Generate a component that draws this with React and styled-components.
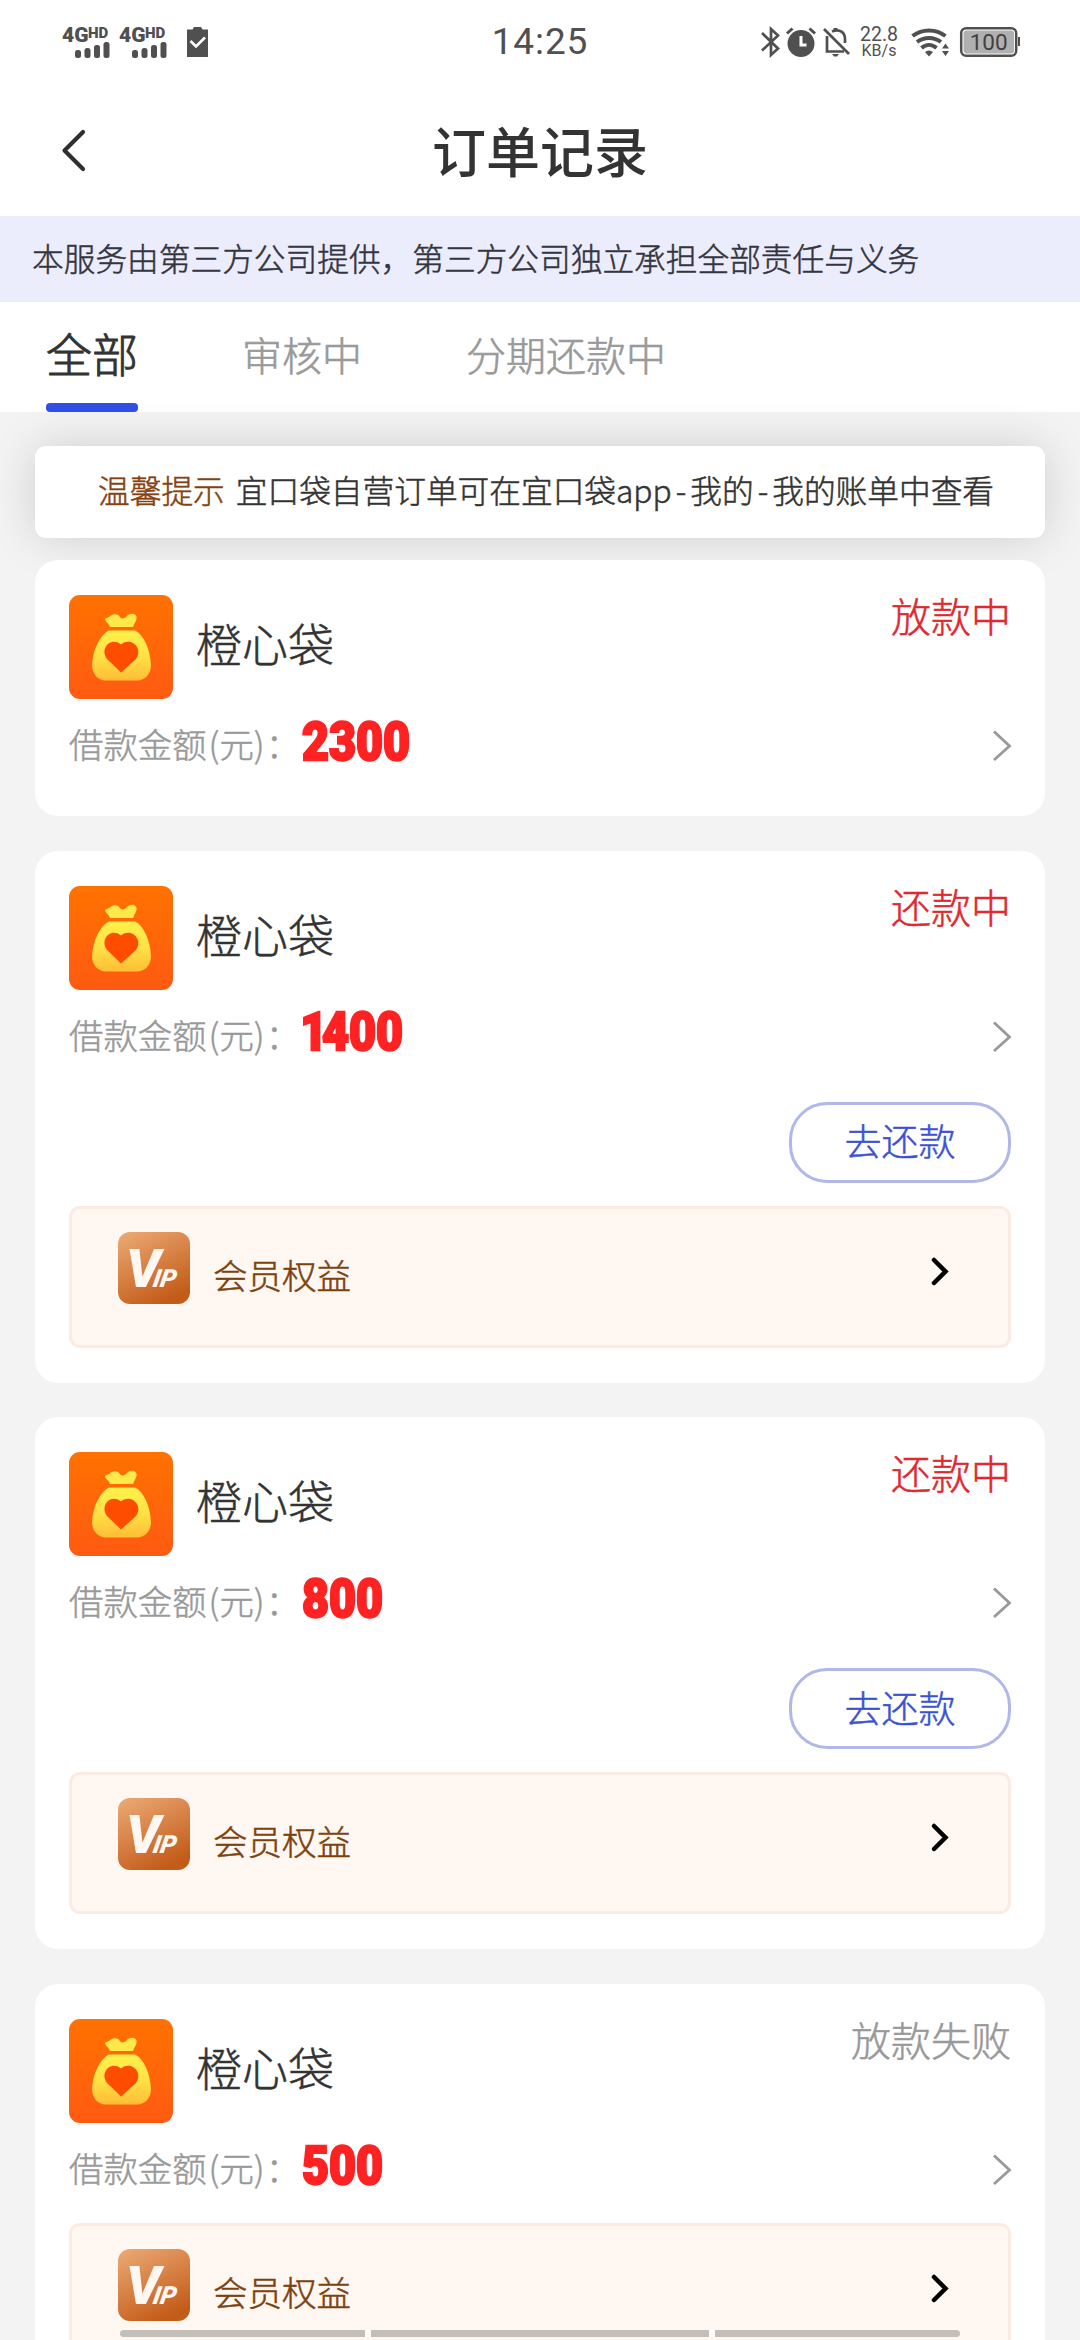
import styled, { createGlobalStyle } from "styled-components";

const GlobalStyle = createGlobalStyle`
  * {
    box-sizing: border-box;
  }

  body {
    margin: 0;
    background-color: #f3f3f3;
    font-family: "Noto Sans CJK SC", "Noto Sans", sans-serif;
    font-weight: 300;
    color: #333;
    -webkit-text-stroke: 0.5px currentColor;
  }
`;

const Page = styled.div`
  position: relative;
  width: 1080px;
  height: 2340px;
  overflow: hidden;
  background-color: #f3f3f3;
`;

const StatusBar = styled.div`
  height: 84px;
  padding: 0 59px 0 62px;
  display: grid;
  grid-template-columns: 1fr auto 1fr;
  align-items: center;
  background-color: #fff;
  -webkit-text-stroke: 0;
`;

const StatusGroup = styled.div`
  display: flex;
  align-items: center;
  justify-content: ${(props) => (props.$end ? "flex-end" : "flex-start")};
`;

const Icon = styled.svg`
  display: block;
  flex-shrink: 0;
  overflow: visible;
  margin-left: ${(props) => props.$gap || 0}px;
`;

const Clock = styled.span`
  padding-right: 3px;
  font-family: Roboto, sans-serif;
  font-size: 37px;
  font-weight: 400;
  line-height: 84px;
  letter-spacing: 0.9px;
  color: #505050;
`;

const NetSpeed = styled.div`
  width: 38px;
  margin-left: 10px;
  display: flex;
  flex-direction: column;
  align-items: center;
  font-family: Roboto, sans-serif;
  font-size: 19.5px;
  font-weight: 400;
  line-height: 17px;
  color: #505050;
`;

const NetUnit = styled.span`
  font-size: 16px;
  line-height: 15px;
`;

const Header = styled.div`
  height: 132px;
  padding: 0 62px;
  display: grid;
  grid-template-columns: 1fr auto 1fr;
  align-items: center;
  background-color: #fff;
`;

const Title = styled.h1`
  margin: 0;
  font-size: 54px;
  font-weight: 500;
  line-height: 132px;
  -webkit-text-stroke: 0;
`;

const Notice = styled.div`
  height: 86px;
  padding-left: 32px;
  font-size: 31.7px;
  line-height: 82px;
  white-space: nowrap;
  color: #33343d;
  background-color: #ebedfd;
`;

const Tabs = styled.div`
  height: 110px;
  padding-left: 46px;
  display: flex;
  background-color: #fff;
`;

const Tab = styled.div`
  height: 110px;
  margin-right: 104px;
  display: flex;
  flex-direction: column;
  justify-content: space-between;
  font-size: ${(props) => (props.$active ? 46 : 40)}px;
  line-height: ${(props) => (props.$active ? 100 : 105)}px;
  color: ${(props) => (props.$active ? "#333" : "#999")};
  -webkit-text-stroke-width: ${(props) => (props.$active ? 0.9 : 0.6)}px;

  &::after {
    content: "";
    height: 9px;
    margin-top: -8px;
    border-radius: 4px;
    background-color: ${(props) => (props.$active ? "#314fe6" : "transparent")};
  }
`;

const Content = styled.div`
  padding: 34px 35px 0;
`;

const Tip = styled.div`
  height: 92px;
  margin-bottom: 22px;
  padding-left: 63px;
  border-radius: 11px;
  font-size: 31.7px;
  line-height: 86px;
  white-space: nowrap;
  background-color: #fff;
  box-shadow: 0 0 46px rgba(0, 0, 0, 0.15);
`;

const TipLabel = styled.span`
  margin-right: 11px;
  color: #854210;
`;

const Dash = styled.span`
  margin: 0 4px;
`;

const Card = styled.div`
  position: relative;
  margin-bottom: 34.7px;
  padding: 35px 34px;
  border-radius: 23px;
  background-color: #fff;
`;

const CardHead = styled.div`
  height: 104px;
  display: flex;
`;

const Name = styled.span`
  margin-left: 23px;
  flex: 1;
  font-size: 46px;
  line-height: 95px;
`;

const Status = styled.span`
  font-size: 40px;
  line-height: 41px;
  color: ${(props) => (props.$muted ? "#999" : "#e0282e")};
`;

const AmountRow = styled.div`
  height: 82px;
  display: flex;
  align-items: center;
`;

const AmountLabel = styled.span`
  padding-top: 6px;
  font-size: 34.4px;
  line-height: 72px;
  color: #999;
`;

const Unit = styled.span`
  margin: 0 1px 0 2px;
`;

const Amount = styled.span`
  flex: 1;
  margin-left: 2px;
  padding-top: 3px;
  font-family: Roboto, sans-serif;
  font-size: 53px;
  font-weight: 900;
  line-height: 80px;
  color: #ff2222;
  -webkit-text-stroke: 2.4px #ff2222;
  transform: scaleX(0.88);
  transform-origin: left;
`;

// the digit 1 is set narrower than the others
const NarrowDigit = styled.span`
  margin: 0 -6px 0 -2px;
`;

const Actions = styled.div`
  margin: 30px 0 23px;
  display: flex;
  justify-content: flex-end;
`;

const RepayButton = styled.button`
  width: 222px;
  height: 81px;
  padding: 0 0 4px;
  border: 3px solid #afb8e8;
  border-radius: 38px;
  font-family: inherit;
  font-size: 37px;
  font-weight: 300;
  line-height: 70px;
  color: #3b51d4;
  background-color: #fff;
  -webkit-text-stroke: 0.5px currentColor;
`;

const VipBox = styled.div`
  height: 142px;
  margin-top: 18px;
  padding: 23px 59px 0 46px;
  display: flex;
  align-items: flex-start;
  border: 3px solid #fbebe0;
  border-radius: 11px;
  background-color: #fff7f1;
`;

const VipText = styled.span`
  margin-left: 23px;
  flex: 1;
  font-size: 34.5px;
  line-height: 84px;
  color: #7d410d;
`;

const NavHint = styled.div`
  position: absolute;
  left: 120px;
  bottom: 3px;
  width: 840px;
  height: 7px;
  display: grid;
  grid-template-columns: 245px 1fr 245px;
  gap: 6px;
  border-radius: 4px;
  overflow: hidden;
  background-color: #fff;
`;

const NavSegment = styled.div`
  background-color: #c4beb8;
`;

function SignalIcon({ gap }) {
  return (
    <Icon $gap={gap} width="48" height="34" viewBox="0 0 48 34" fill="#505050">
      <text x="0" y="17" fontFamily="Roboto, sans-serif" fontWeight="900" fontSize="21">
        4G
        <tspan x="26" y="12.5" fontSize="15">HD</tspan>
      </text>
      <rect x="13" y="25" width="6" height="8" rx="2.5" />
      <rect x="22.5" y="23" width="6" height="10" rx="2.5" />
      <rect x="32" y="20" width="6" height="13" rx="2.5" />
      <rect x="41.5" y="17" width="6" height="16" rx="2.5" />
    </Icon>
  );
}

function StatusIcons() {
  return (
    <StatusGroup $end>
      <Icon width="19" height="30" viewBox="0 0 19 30" fill="none" stroke="#505050" strokeWidth="2.7">
        <path d="M1 6 L17 21.5 L10 28 V2 L17 8.5 L1 23.5" />
      </Icon>
      <Icon $gap={6} width="30" height="30" viewBox="0 0 30 30">
        <circle cx="15" cy="16.5" r="13.5" fill="#505050" />
        <path d="M1 6.5 L6.5 1.5 M29 6.5 L23.5 1.5" stroke="#505050" strokeWidth="3" />
        <path d="M15 9 V18 H20.5" fill="none" stroke="#fff" strokeWidth="3" />
      </Icon>
      <Icon $gap={7} width="27" height="30" viewBox="0 0 27 30" fill="none" stroke="#505050" strokeWidth="2.7">
        <path d="M1 2 L26 27 M4 9 V24.5 H21 M9 4.5 C17 1 22 6 22 12 V16" />
        <path d="M10.5 2.5 H14.5" strokeWidth="3" />
        <path d="M9 27 H16 L14 29.5 H11 Z" fill="#505050" stroke="none" />
      </Icon>
      <NetSpeed>
        <span>22.8</span>
        <NetUnit>KB/s</NetUnit>
      </NetSpeed>
      <Icon $gap={13} width="39" height="29" viewBox="0 0 39 29" fill="none" stroke="#505050" strokeWidth="4">
        <path d="M1.5 8 C11 0.5 25 0.5 34.5 8" />
        <path d="M6 14 C13 8.5 23 8.5 30 14" />
        <path d="M10.5 20 C15 16 21 16 25.5 20" />
        <path d="M14 24 Q18 21 22 24 L18 28.5 Z M31 20.5 L34.5 15.5 L38 20.5 Z M31 23 L34.5 28 L38 23 Z" fill="#505050" stroke="none" />
      </Icon>
      <Icon $gap={10} width="61" height="30" viewBox="0 0 61 30">
        <rect x="1.2" y="1.2" width="55" height="27.6" rx="5" fill="#fff" stroke="#505050" strokeWidth="2.5" />
        <rect x="3.5" y="3.5" width="50.5" height="23" rx="3" fill="#b0b0b0" />
        <path d="M58 10 h2 v9 h-2 z" fill="#505050" />
        <text x="28.7" y="23" textAnchor="middle" fontFamily="Roboto, sans-serif" fontWeight="400" fontSize="22.5" fill="#404040">100</text>
      </Icon>
    </StatusGroup>
  );
}

function BagLogo() {
  return (
    <Icon width="104" height="104" viewBox="0 0 104 104">
      <defs>
        <linearGradient id="bagBg" x1="0" y1="0" x2="0" y2="1">
          <stop offset="0" stopColor="#ff7200" />
          <stop offset="1" stopColor="#ff5a12" />
        </linearGradient>
        <linearGradient id="bagBody" x1="0" y1="0" x2="0" y2="1">
          <stop offset="0" stopColor="#fff04a" />
          <stop offset="0.5" stopColor="#ffe246" />
          <stop offset="1" stopColor="#ffbd36" />
        </linearGradient>
      </defs>
      <rect width="104" height="104" rx="11" fill="url(#bagBg)" />
      <path d="M36 24 C38 22 40 23 42 20.5 C45 18.5 49 19 50.5 21.5 C52 24 55 24 57 22 C60 18 65 18 67 20.5 C69 24 66 27 64 32 H41 C40 28 36 27 36 24 Z" fill="#ffe84a" />
      <path d="M40 35.5 H66 C75 40 81 54 82 70 C82 79 76 85.5 68 85.5 H37 C29 85.5 23 79 23 70 C24 54 31 40 40 35.5 Z" fill="url(#bagBody)" />
      <path d="M52 77.5 L38.5 64.5 C30 55 41 41 52 49.5 C63 41 75 55 66.5 64.5 Z" fill="#ff4d00" />
    </Icon>
  );
}

function VipLogo() {
  return (
    <Icon width="72" height="72" viewBox="0 0 72 72">
      <defs>
        <linearGradient id="vipBg" x1="0.1" y1="0" x2="0.6" y2="1">
          <stop offset="0" stopColor="#eba873" />
          <stop offset="1" stopColor="#c35b19" />
        </linearGradient>
      </defs>
      <rect width="72" height="72" rx="12" fill="url(#vipBg)" />
      <path d="M11.5 17 H20 V20.5 H13 Z" fill="#fff7f1" />
      <g fill="#fff7f1" stroke="none" fontFamily="Roboto, sans-serif" fontWeight="900" fontStyle="italic">
        <text transform="translate(8 55)" fontSize="54">V</text>
        <text transform="translate(34 55) skewX(-10)" fontSize="25">IP</text>
      </g>
    </Icon>
  );
}

function OrderCard({ amount, status, muted, repay, vip }) {
  return (
    <Card>
      <CardHead>
        <BagLogo />
        <Name>橙心袋</Name>
        <Status $muted={muted}>{status}</Status>
      </CardHead>
      <AmountRow>
        <AmountLabel>
          借款金额<Unit>(元)</Unit>：
        </AmountLabel>
        <Amount>
          {amount.startsWith("1") ? (
            <>
              <NarrowDigit>1</NarrowDigit>
              {amount.slice(1)}
            </>
          ) : (
            amount
          )}
        </Amount>
        <Icon width="18" height="32" viewBox="0 0 18 32" fill="none" stroke="#999" strokeWidth="2.8">
          <path d="M1 7.5 L16.5 22 L1 36" />
        </Icon>
      </AmountRow>
      {repay && (
        <Actions>
          <RepayButton>去还款</RepayButton>
        </Actions>
      )}
      {vip && (
        <VipBox>
          <VipLogo />
          <VipText>会员权益</VipText>
          <Icon width="18" height="78" viewBox="0 0 18 78" fill="none" stroke="#000" strokeWidth="4.5" strokeLinecap="round">
            <path d="M3 28 L14.5 39.5 L3 51" />
          </Icon>
        </VipBox>
      )}
    </Card>
  );
}

const orders = [
  { amount: "2300", status: "放款中" },
  { amount: "1400", status: "还款中", repay: true, vip: true },
  { amount: "800", status: "还款中", repay: true, vip: true },
  { amount: "500", status: "放款失败", muted: true, vip: true },
];

function App() {
  return (
    <Page>
      <GlobalStyle />
      <StatusBar>
        <StatusGroup>
          <SignalIcon />
          <SignalIcon gap={9} />
          <Icon $gap={20} width="21" height="30" viewBox="0 0 21 30">
            <path d="M0 2.5 H5.5 L7 0 H14 L15.5 2.5 H21 V30 H0 Z" fill="#505050" />
            <path d="M3.5 14 L9 19.5 L18 10.5" fill="none" stroke="#fff" strokeWidth="2.6" />
          </Icon>
        </StatusGroup>
        <Clock>14:25</Clock>
        <StatusIcons />
      </StatusBar>
      <Header>
        <Icon width="24" height="42" viewBox="0 0 24 42" fill="none" stroke="#2f2f2f" strokeWidth="4.2" strokeLinecap="round" strokeLinejoin="round">
          <path d="M21 3 L2.5 21.5 L21 40" />
        </Icon>
        <Title>订单记录</Title>
      </Header>
      <Notice>本服务由第三方公司提供，第三方公司独立承担全部责任与义务</Notice>
      <Tabs>
        <Tab $active>全部</Tab>
        <Tab>审核中</Tab>
        <Tab>分期还款中</Tab>
      </Tabs>
      <Content>
        <Tip>
          <TipLabel>温馨提示</TipLabel>
          宜口袋自营订单可在宜口袋app<Dash>-</Dash>我的<Dash>-</Dash>我的账单中查看
        </Tip>
        {orders.map((order) => (
          <OrderCard key={order.amount} {...order} />
        ))}
      </Content>
      <NavHint>
        <NavSegment />
        <NavSegment />
        <NavSegment />
      </NavHint>
    </Page>
  );
}

export default App;
